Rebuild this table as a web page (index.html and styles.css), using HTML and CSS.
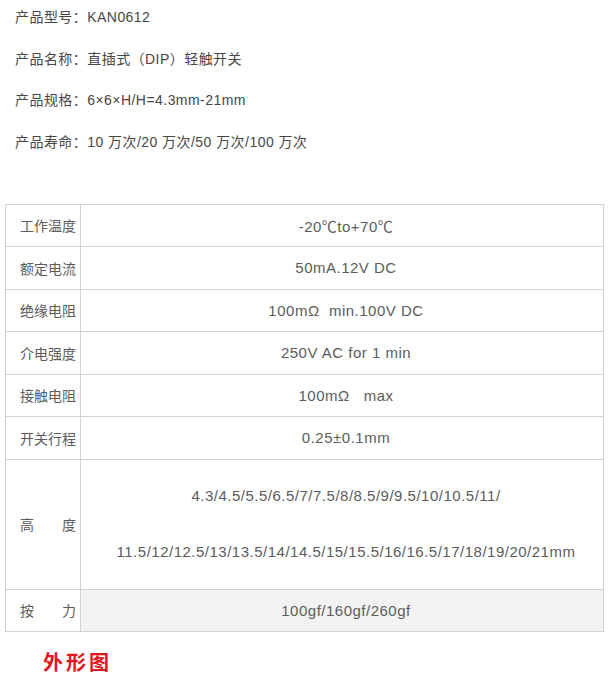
FILE: index.html
```html
<!DOCTYPE html>
<html lang="zh-CN">

<head>
  <meta charset="UTF-8" />
  <meta name="viewport" content="width=device-width, initial-scale=1.0" />
  <title>KAN0612 轻触开关</title>
  <link rel="stylesheet" href="styles.css">
</head>

<body>
  <div class="product-info">
    <p>产品型号：KAN0612</p>
    <p>产品名称：直插式（DIP）轻触开关</p>
    <p>产品规格：6×6×H/H=4.3mm-21mm</p>
    <p>产品寿命：10 万次/20 万次/50 万次/100 万次</p>
  </div>

  <table class="spec-table">
    <tr>
      <td class="label">工作温度</td>
      <td class="value">-20℃to+70℃</td>
    </tr>
    <tr>
      <td class="label">额定电流</td>
      <td class="value">50mA.12V DC</td>
    </tr>
    <tr>
      <td class="label">绝缘电阻</td>
      <td class="value">100mΩ&nbsp; min.100V DC</td>
    </tr>
    <tr>
      <td class="label">介电强度</td>
      <td class="value">250V AC for 1 min</td>
    </tr>
    <tr>
      <td class="label">接触电阻</td>
      <td class="value">100mΩ&nbsp;&nbsp; max</td>
    </tr>
    <tr>
      <td class="label">开关行程</td>
      <td class="value">0.25±0.1mm</td>
    </tr>
    <tr class="tall">
      <td class="label">高度</td>
      <td class="value stack">
        <p>4.3/4.5/5.5/6.5/7/7.5/8/8.5/9/9.5/10/10.5/11/</p>
        <p>11.5/12/12.5/13/13.5/14/14.5/15/15.5/16/16.5/17/18/19/20/21mm</p>
      </td>
    </tr>
    <tr>
      <td class="label">按力</td>
      <td class="value shaded">100gf/160gf/260gf</td>
    </tr>
  </table>

  <h3 class="section-title">外形图</h3>
</body>

</html>
```

FILE: styles.css
```css
:root {
  --text: #474747;
  --text-light: #5c5c5c;
  --border: #d2d2d2;
  --shade: #f3f3f3;
  --red: #e2161d;
}

* {
  box-sizing: border-box;
}

body {
  margin: 0;
  background: #ffffff;
  font-family: "Liberation Sans", "Noto Sans CJK SC", sans-serif;
  color: var(--text);
}

.product-info {
  padding: 1px 0 0 15px;
}

.product-info p {
  margin: 0 0 9.5px;
  font-size: 14px;
  line-height: 32px;
  letter-spacing: 0.45px;
}

.product-info p:last-child {
  margin-bottom: 0;
}

/* Spec table */
.spec-table {
  margin: 46px 0 0 5px;
  width: 599px;
  border-collapse: collapse;
  color: var(--text-light);
}

.spec-table tr {
  height: 42.5px;
}

.spec-table tr.tall {
  height: 130px;
}

.spec-table td {
  border: 1px solid var(--border);
  padding: 0;
  vertical-align: middle;
}

.spec-table .label {
  width: 75px;
  padding: 0 4px 0 14px;
  font-size: 14px;
  text-align: justify;
  text-align-last: justify;
}

.spec-table .value {
  padding-left: 8px;
  text-align: center;
  font-size: 15px;
  letter-spacing: 0.5px;
}

.spec-table .stack p {
  margin: 0;
  line-height: 56px;
}

.spec-table .shaded {
  background: var(--shade);
}

.section-title {
  margin: 16px 0 0 43px;
  font-size: 20px;
  line-height: 30px;
  font-weight: 700;
  letter-spacing: 3px;
  color: var(--red);
}
```
